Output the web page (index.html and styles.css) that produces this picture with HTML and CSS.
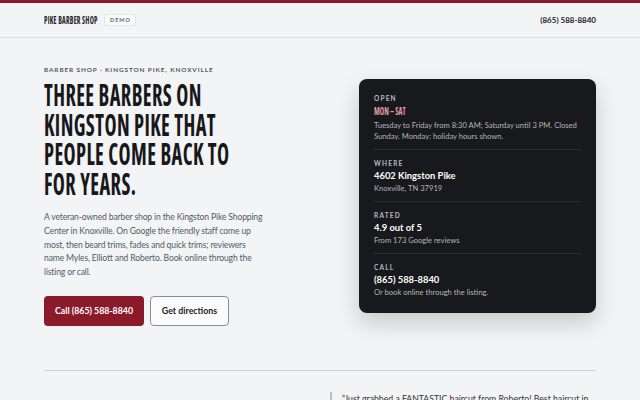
FILE: index.html
```html
<!DOCTYPE html>
<html lang="en">
<head>
<meta charset="utf-8">
<title>Pike Barber Shop</title>
<link rel="stylesheet" href="styles.css">
</head>
<body>
<div class="topbar"></div>
<header class="header">
  <div class="brand">
    <span class="logo"><span class="squeeze">PIKE BARBER SHOP</span></span>
    <span class="badge">DEMO</span>
  </div>
  <a class="header-phone" href="#">(865) 588-8840</a>
</header>
<main class="wrap">
  <section class="hero">
    <div class="hero-copy">
      <p class="eyebrow">BARBER SHOP · KINGSTON PIKE, KNOXVILLE</p>
      <h1 class="title"><span class="squeeze">THREE BARBERS ON<br>KINGSTON PIKE THAT<br>PEOPLE COME BACK TO<br>FOR YEARS.</span></h1>
      <p class="lede">A veteran-owned barber shop in the Kingston Pike Shopping<br>Center in Knoxville. On Google the friendly staff come up<br>most, then beard trims, fades and quick trims; reviewers<br>name Myles, Elliott and Roberto. Book online through the<br>listing or call.</p>
      <div class="actions">
        <a class="btn btn-primary" href="#">Call (865) 588-8840</a>
        <a class="btn btn-ghost" href="#">Get directions</a>
      </div>
    </div>
    <aside class="card">
      <div class="card-row">
        <div class="label">OPEN</div>
        <div class="hours"><span class="squeeze">MON – SAT</span></div>
        <div class="note">Tuesday to Friday from 8:30 AM; Saturday until 3 PM. Closed Sunday. Monday: holiday hours shown.</div>
      </div>
      <div class="card-row">
        <div class="label">WHERE</div>
        <div class="value">4602 Kingston Pike</div>
        <div class="note">Knoxville, TN 37919</div>
      </div>
      <div class="card-row">
        <div class="label">RATED</div>
        <div class="value">4.9 out of 5</div>
        <div class="note">From 173 Google reviews</div>
      </div>
      <div class="card-row">
        <div class="label">CALL</div>
        <div class="value">(865) 588-8840</div>
        <div class="note">Or book online through the listing.</div>
      </div>
    </aside>
  </section>
  <section class="reviews">
    <div class="reviews-side"></div>
    <blockquote class="quote">“Just grabbed a FANTASTIC haircut from Roberto! Best haircut in town.”</blockquote>
  </section>
</main>
</body>
</html>
```

FILE: styles.css
```css
* { box-sizing: border-box; }
html, body { margin: 0; padding: 0; }
body {
  background: #f3f4f6;
  font-family: Lato, "Noto Sans", sans-serif;
  color: #1b1b1f;
  overflow: hidden;
}
a { text-decoration: none; color: inherit; }
.topbar { height: 3px; background: #8b1a2b; }
.header {
  height: 35px;
  padding: 0 44px;
  display: flex;
  align-items: center;
  justify-content: space-between;
  border-bottom: 1px solid #dfe0e3;
}
.brand { display: flex; align-items: center; gap: 6px; }
.logo, .title, .hours {
  font-family: "Open Sans", "DejaVu Sans Condensed", sans-serif;
  font-stretch: 75%;
  font-weight: 700;
  white-space: nowrap;
}
.squeeze {
  display: inline-block;
  transform-origin: left center;
}
.logo {
  display: block;
  width: 54px;
  font-size: 10px;
  line-height: 12px;
  color: #1b1b1f;
  letter-spacing: 0.3px;
}
.logo .squeeze { transform: scaleX(0.7); }
.badge {
  font-size: 5.5px;
  letter-spacing: 1px;
  color: #666;
  background: #fafafa;
  border: 1px solid #e2e3e6;
  border-radius: 2px;
  padding: 2px 4px 2px 5px;
  font-weight: 700;
}
.header-phone { font-size: 8px; font-weight: 700; }
.wrap { padding: 0 44px; }
.hero {
  display: flex;
  align-items: center;
  justify-content: space-between;
  padding: 28px 0 44px;
  border-bottom: 1px solid #cfd1d5;
}
.hero-copy { width: 250px; }
.eyebrow {
  margin: 0 0 7px;
  font-size: 6.4px;
  letter-spacing: 0.9px;
  color: #555;
  font-weight: 700;
}
.title {
  margin: 0 0 13px;
  font-size: 30px;
  line-height: 29.5px;
  letter-spacing: 0.6px;
  color: #18181b;
}
.title .squeeze { transform: scaleX(0.68); transform-origin: left top; }
.lede {
  margin: 0 0 16px;
  font-size: 8.6px;
  letter-spacing: -0.15px;
  line-height: 13.8px;
  color: #555a62;
  width: 250px;
}
.actions { display: flex; gap: 6px; }
.btn {
  display: inline-flex;
  align-items: center;
  justify-content: center;
  height: 30px;
  border-radius: 4px;
  font-size: 8.8px;
  font-weight: 700;
  white-space: nowrap;
}
.btn-primary { background: #8b1a2b; color: #fff; width: 100px; }
.btn-ghost { border: 1px solid #8a8d92; background: #fbfbfc; color: #1b1b1f; width: 79px; }
.card {
  width: 237px;
  background: #18191c;
  border-radius: 8px;
  padding: 6px 15px 8px;
  box-shadow: 0 10px 24px rgba(0,0,0,0.18);
  color: #f2f2f2;
}
.card-row { padding: 10px 0 7px; border-bottom: 1px solid #2c2d31; }
.card-row:last-child { border-bottom: none; }
.label {
  font-size: 6.5px;
  letter-spacing: 1.2px;
  font-weight: 700;
  color: #b9bbc0;
  margin-bottom: 3px;
}
.hours {
  font-size: 11px;
  line-height: 12px;
  color: #e79aa8;
  margin-bottom: 3px;
}
.hours .squeeze { transform: scaleX(0.68); }
.value { font-size: 9.4px; font-weight: 700; color: #fff; margin-bottom: 2px; }
.note { font-size: 7.6px; line-height: 11px; color: #b3b5ba; }
.reviews {
  display: flex;
  gap: 20px;
  padding-top: 21px;
}
.reviews-side { width: 266px; }
.quote {
  margin: 0;
  border-left: 2px solid #bcbec2;
  padding-left: 10px;
  font-size: 8.7px;
  line-height: 13px;
  color: #333;
  width: 266px;
}
```
